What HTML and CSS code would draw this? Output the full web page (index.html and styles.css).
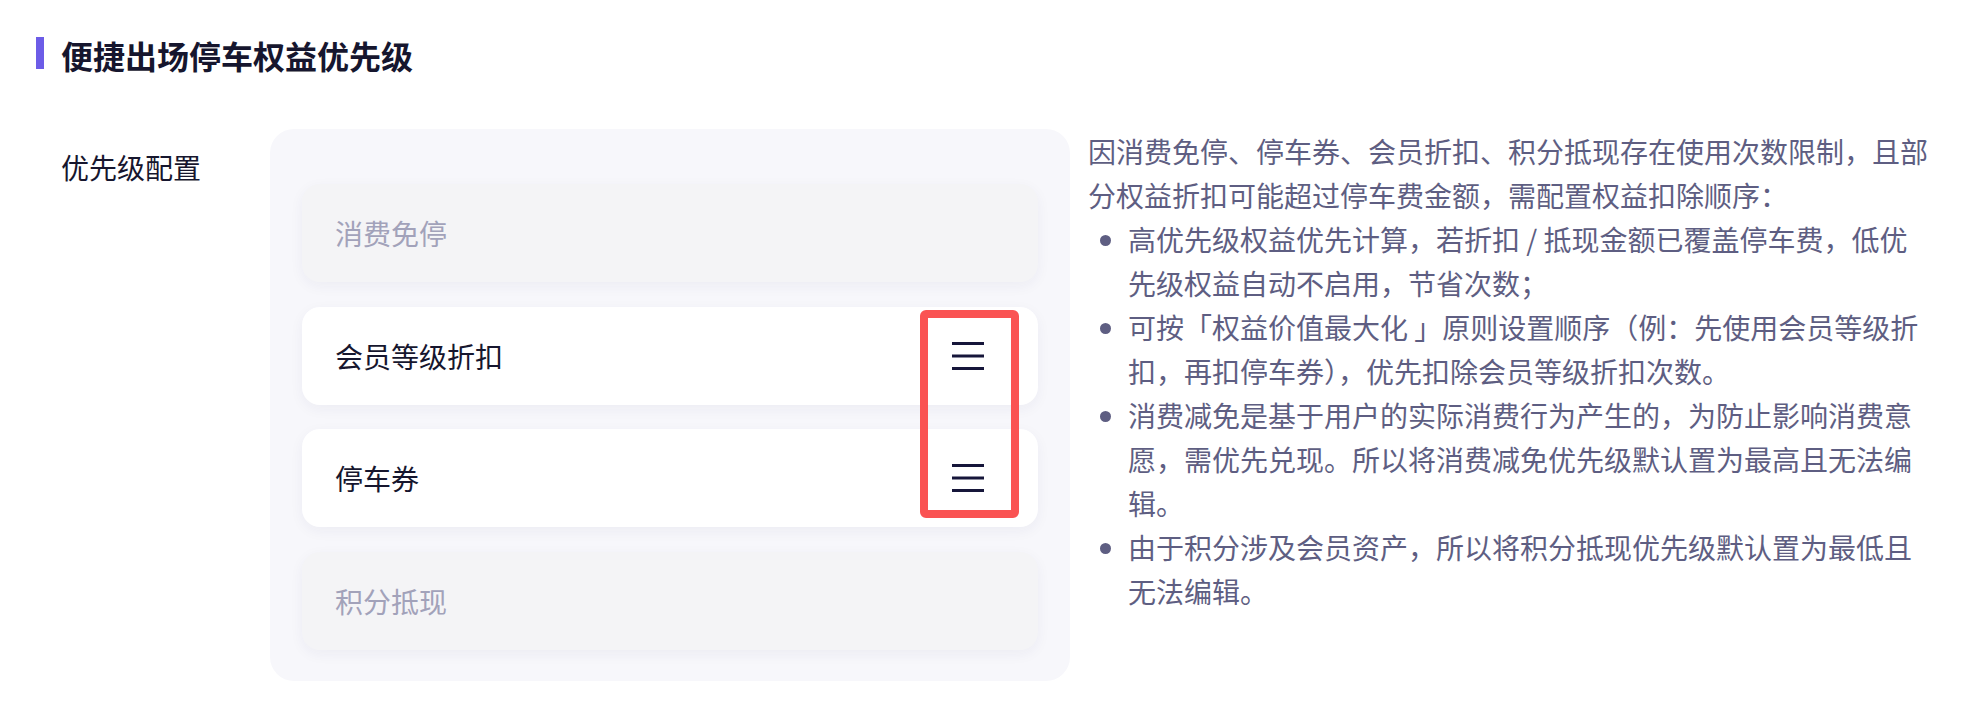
FILE: index.html
```html
<!DOCTYPE html>
<html lang="zh-CN">
<head>
<meta charset="utf-8">
<title>便捷出场停车权益优先级</title>
<link rel="stylesheet" href="styles.css">
</head>
<body>
<div class="page">
  <h2 class="section-title"><span class="accent"></span><span class="title-text">便捷出场停车权益优先级</span></h2>
  <div class="row">
    <div class="label">优先级配置</div>
    <div class="panel">
      <div class="card card-disabled"><span class="card-text">消费免停</span></div>
      <div class="card"><span class="card-text">会员等级折扣</span>
        <svg class="drag" width="32" height="28" viewBox="0 0 32 28"><path d="M0 1.5H32M0 14H32M0 26.5H32" stroke="#16163a" stroke-width="3" fill="none"/></svg>
      </div>
      <div class="card"><span class="card-text">停车券</span>
        <svg class="drag" width="32" height="28" viewBox="0 0 32 28"><path d="M0 1.5H32M0 14H32M0 26.5H32" stroke="#16163a" stroke-width="3" fill="none"/></svg>
      </div>
      <div class="card card-disabled"><span class="card-text">积分抵现</span></div>
      <div class="highlight"></div>
    </div>
    <div class="desc">
      <p class="desc-intro">因消费免停、停车券、会员折扣、积分抵现存在使用次数限制，且部分权益折扣可能超过停车费金额，需配置权益扣除顺序：</p>
      <ul class="desc-list">
        <li>高优先级权益优先计算，若折扣 / 抵现金额已覆盖停车费，低优先级权益自动不启用，节省次数；</li>
        <li>可按「权益价值最大化 」原则设置顺序（例：先使用会员等级折扣，再扣停车券），优先扣除会员等级折扣次数。</li>
        <li>消费减免是基于用户的实际消费行为产生的，为防止影响消费意愿，需优先兑现。所以将消费减免优先级默认置为最高且无法编辑。</li>
        <li>由于积分涉及会员资产，所以将积分抵现优先级默认置为最低且无法编辑。</li>
      </ul>
    </div>
  </div>
</div>
</body>
</html>
```

FILE: styles.css
```css
html, body {
  margin: 0;
  padding: 0;
  background: #ffffff;
}

body {
  font-family: "Noto Sans CJK SC", "Noto Sans", sans-serif;
  color: #16162e;
}

.page {
  padding: 37px 0 0 36px;
}

.section-title {
  display: flex;
  align-items: center;
  gap: 17px;
  margin: 0;
  height: 32px;
}

.accent {
  width: 8px;
  height: 32px;
  background: #6c5ce7;
  flex: none;
}

.title-text {
  font-size: 32px;
  line-height: 32px;
  font-weight: 700;
  color: #16162e;
  position: relative;
  top: 2px;
}

.row {
  display: flex;
  align-items: flex-start;
  margin-top: 60px;
  padding-left: 25px;
}

.label {
  width: 209px;
  flex: none;
  padding-top: 16px;
  font-size: 28px;
  line-height: 44px;
  color: #16162e;
}

.panel {
  position: relative;
  width: 800px;
  height: 552px;
  box-sizing: border-box;
  padding: 55px 32px 0 32px;
  background: #f7f7fb;
  border-radius: 24px;
  display: flex;
  flex-direction: column;
  gap: 24.5px;
  flex: none;
}

.card {
  height: 98px;
  box-sizing: border-box;
  display: flex;
  align-items: center;
  justify-content: space-between;
  padding: 0 54px 0 33px;
  background: #ffffff;
  border-radius: 18px;
  box-shadow: 0 4px 14px rgba(40, 40, 90, 0.05);
}

.card-disabled {
  background: #f4f4f6;
}

.card-text {
  font-size: 28px;
  line-height: 40px;
  color: #16162e;
}

.card-disabled .card-text {
  color: #a2a2ba;
}

.drag {
  display: block;
  flex: none;
}

.highlight {
  position: absolute;
  left: 650px;
  top: 181px;
  width: 99px;
  height: 208px;
  box-sizing: border-box;
  border: 8px solid #fa5353;
  border-radius: 6px;
}

.desc {
  width: 842px;
  margin-left: 18px;
  font-size: 28px;
  line-height: 44px;
  color: #5e5e82;
}

.desc-intro {
  margin: 0;
}

.desc-list {
  margin: 0;
  padding-left: 40px;
}

.desc-list li::marker {
  color: #5e5e82;
}
```
